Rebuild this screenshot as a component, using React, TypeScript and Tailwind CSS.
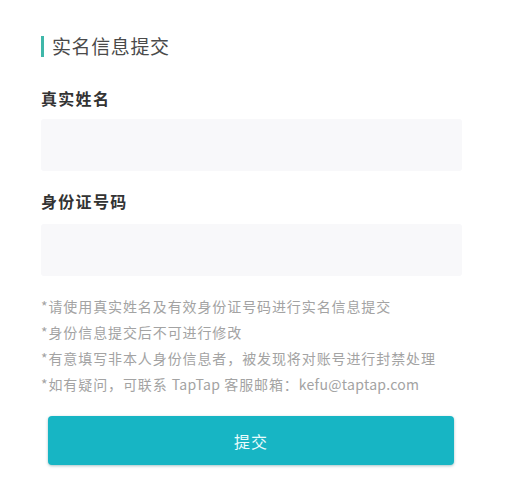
export default function App() {
  return (
    <div
      className="min-h-screen w-[514px] bg-white"
      style={{ fontFamily: '"Noto Sans CJK SC", "Noto Sans", sans-serif' }}
    >
      <div className="pl-[41px] pr-[52px] pt-[33px]">
        <div className="flex items-center gap-[8px]">
          <span className="h-[21px] w-[3px] bg-[#3fb7a9]" />
          <h1 className="text-[19px] leading-[26px] tracking-[0.6px] text-[#4a4a4a]">实名信息提交</h1>
        </div>

        <label className="mt-[28px] block text-[16px] font-bold leading-[22px] tracking-[1.3px] text-[#333]">
          真实姓名
        </label>
        <div className="mt-[10px] h-[52px] rounded-[3px] bg-[#f8f8fa]" />

        <label className="mt-[19px] block text-[16px] font-bold leading-[22px] tracking-[1.3px] text-[#333]">
          身份证号码
        </label>
        <div className="mt-[12px] h-[52px] rounded-[3px] bg-[#f8f8fa]" />

        <div className="mt-[21px] flex flex-col gap-[7px] text-[14px] leading-[19px] tracking-[0.9px] text-[#a3a3a3]">
          <p>*请使用真实姓名及有效身份证号码进行实名信息提交</p>
          <p>*身份信息提交后不可进行修改</p>
          <p>*有意填写非本人身份信息者，被发现将对账号进行封禁处理</p>
          <p>
            *如有疑问，可联系 <span className="tracking-[0.3px]">TapTap</span> 客服邮箱：
            <span className="tracking-[0.3px]">kefu@taptap.com</span>
          </p>
        </div>

        <button className="ml-[7px] mt-[22px] flex h-[49px] w-[406px] items-center justify-center rounded-[4px] bg-[#17b5c4] text-[16px] tracking-[1px] text-[#eafcfd] shadow-[0_1px_3px_rgba(0,80,90,0.35)]">
          提交
        </button>
      </div>
    </div>
  );
}
